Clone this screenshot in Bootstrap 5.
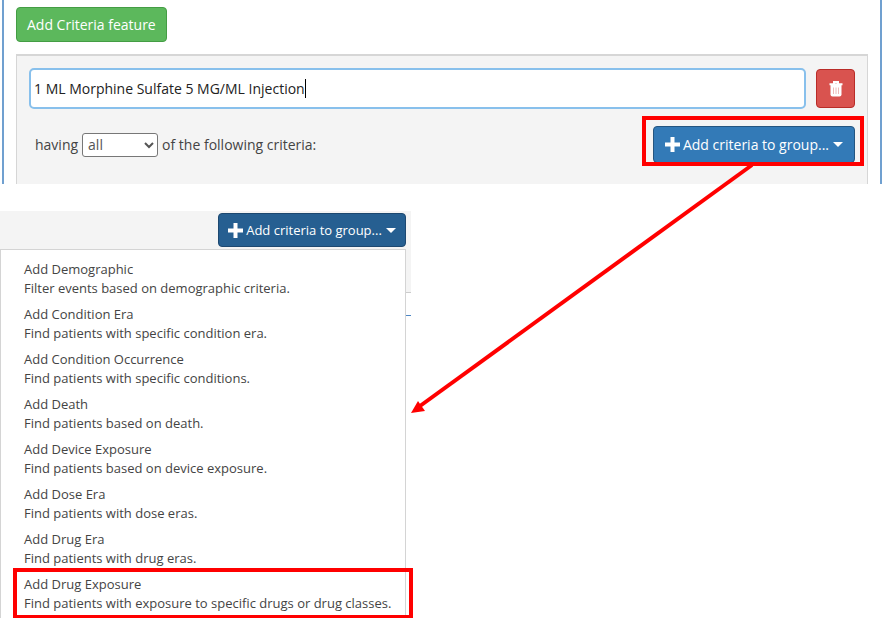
<!DOCTYPE html>
<html lang="en">
<head>
<meta charset="utf-8">
<meta name="viewport" content="width=device-width, initial-scale=1">
<title>Add criteria to group</title>
<link href="https://cdn.jsdelivr.net/npm/bootstrap@5.3.0/dist/css/bootstrap.min.css" rel="stylesheet">
<style>
body{font-family:"Open Sans","Noto Sans",sans-serif;font-size:13px;line-height:19px;color:#444;background:#fff}
.editor{font-size:14px;border:solid #70a0d0;border-width:0 2px;margin-left:2px;padding:7px 12px 0}
.btn{font-size:14px;line-height:19px;border-radius:4px;white-space:nowrap}
.btn-feature{--bs-btn-color:#fff;--bs-btn-bg:#5cb85c;--bs-btn-border-color:#449d44;--bs-btn-hover-color:#fff;--bs-btn-hover-bg:#449d44;padding:7px 10px;margin-bottom:12px}
.criteria-panel{background:#f4f4f4;border:solid #d6d6d6;border-width:2px 1px 0;padding:12px 12px 0}
.name-line{gap:10px}
.name-box{height:41px;font-size:14px;padding:0 3px;color:#222;border:2px solid #88c0ec;border-radius:5px}
.name-wrap::after{content:"";position:absolute;left:276px;top:11px;width:1px;height:19px;background:#000}
.btn-remove{--bs-btn-color:#fff;--bs-btn-bg:#d9534f;--bs-btn-border-color:#b92c28;--bs-btn-hover-color:#fff;--bs-btn-hover-bg:#c9302c;width:39px;height:39px}
.group-line{padding:17px 0 21px 6px}
.match-select{width:76px;height:24px;padding:0 1px;border:1px solid #777;border-radius:3px;background:#fff;color:#555}
.btn-group-add{--bs-btn-color:#fff;--bs-btn-bg:#337ab7;--bs-btn-border-color:#245580;--bs-btn-hover-color:#fff;--bs-btn-hover-bg:#286090;height:37px;padding:0 8px}
.btn-group-add.pressed{--bs-btn-bg:#265f91;--bs-btn-border-color:#1d4870;font-size:13px;height:34px}
.btn-group-add svg{margin-right:3px;flex-shrink:0}
.btn-group-add::after{margin-left:4px;border-width:5px 5px 0}
.wide-button{width:202px}
.slim-button{width:188px}
.callout::after{content:"";position:absolute;inset:-10px -9px -3px -11px;border:4px solid red;pointer-events:none}
.menu-view{max-width:411px;margin-top:27px}
.menu-back,.menu-front{grid-area:1/1}
.menu-strip{height:82px;background:#f4f4f4;border-bottom:1px solid #ccc;padding:2px 5px 0 0}
.blue-rule{height:23px;border-bottom:1px solid #4d86c4}
.menu-front{z-index:1;margin:38px 5px 0 0;background:#fff;border:solid #d4d4d4;border-width:1px 1px 0;padding:7px 0 1px}
.menu-front a{display:block;color:#444;text-decoration:none;padding:3px 10px 4px 23px;white-space:nowrap}
.menu-front a:hover{background:#f4f4f4}
.marked::after{content:"";position:absolute;inset:-4px -8px -2px 12px;border:4px solid red;pointer-events:none}
.pointer-line{position:absolute;left:0;top:0;z-index:2;pointer-events:none}
</style>
<script src="https://cdn.jsdelivr.net/npm/bootstrap@5.3.0/dist/js/bootstrap.bundle.min.js"></script>
</head>
<body>
<main class="position-relative">
  <section class="editor">
    <button type="button" class="btn btn-feature d-block">Add Criteria feature</button>
    <div class="criteria-panel">
      <div class="name-line d-flex align-items-center">
        <div class="name-wrap position-relative flex-grow-1">
          <input type="text" class="name-box form-control" aria-label="Criteria name" value="1 ML Morphine Sulfate 5 MG/ML Injection">
        </div>
        <button type="button" class="btn btn-remove d-flex align-items-center justify-content-center p-0" aria-label="Remove">
          <svg width="14" height="16" viewBox="0 0 14 16" fill="none"><path d="M5 2.500V1h4v1.500M.5 3.200h13" stroke="#fff" stroke-width="2"/><path d="M1.500 4h11v9.500q0 2-2 2h-7q-2 0-2-2z" fill="#fff"/><path d="M4.500 6.500v6.500M7 6.500v6.500M9.500 6.500v6.500" stroke="#eebab8"/></svg>
        </button>
      </div>
      <div class="group-line d-flex align-items-center justify-content-between">
        <div class="d-flex align-items-center gap-1">
          <label for="match">having</label>
          <select id="match" class="match-select"><option>all</option><option>any</option></select>
          <span>of the following criteria:</span>
        </div>
        <div class="callout position-relative">
          <button type="button" class="btn btn-group-add wide-button dropdown-toggle d-flex align-items-center justify-content-center">
            <svg width="15" height="15" viewBox="0 0 15 15"><path d="M7.500 0v15M0 7.500h15" stroke="#fff" stroke-width="4"/></svg>Add criteria to group...
          </button>
        </div>
      </div>
    </div>
  </section>

  <section class="menu-view d-grid">
    <div class="menu-back">
      <div class="menu-strip d-flex justify-content-end align-items-start">
        <button type="button" class="btn btn-group-add pressed slim-button dropdown-toggle d-flex align-items-center justify-content-center" aria-expanded="true">
          <svg width="15" height="15" viewBox="0 0 15 15"><path d="M7.500 0v15M0 7.500h15" stroke="#fff" stroke-width="4"/></svg>Add criteria to group...
        </button>
      </div>
      <div class="blue-rule"></div>
    </div>
    <nav class="menu-front" aria-label="Criteria types">
      <a href="#">Add Demographic<br>Filter events based on demographic criteria.</a>
      <a href="#">Add Condition Era<br>Find patients with specific condition era.</a>
      <a href="#">Add Condition Occurrence<br>Find patients with specific conditions.</a>
      <a href="#">Add Death<br>Find patients based on death.</a>
      <a href="#">Add Device Exposure<br>Find patients based on device exposure.</a>
      <a href="#">Add Dose Era<br>Find patients with dose eras.</a>
      <a href="#">Add Drug Era<br>Find patients with drug eras.</a>
      <a href="#" class="marked position-relative">Add Drug Exposure<br>Find patients with exposure to specific drugs or drug classes.</a>
    </nav>
  </section>

  <svg class="pointer-line" width="760" height="420" viewBox="0 0 760 420" aria-hidden="true"><path d="M752 165 420 406" stroke="red" stroke-width="4"/><path d="m411 413 7-12 7 10z" fill="red"/></svg>
</main>
</body>
</html>
